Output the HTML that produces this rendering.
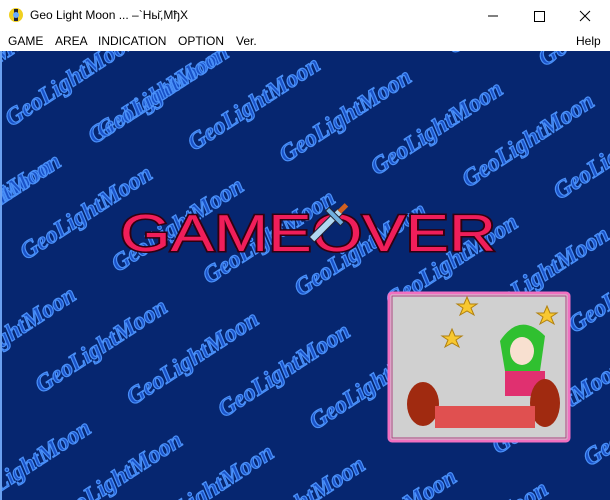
<!DOCTYPE html>
<html><head><meta charset="utf-8"><style>
html,body{margin:0;padding:0;width:610px;height:500px;overflow:hidden;background:#fff;font-family:"Liberation Sans","Noto Sans CJK JP",sans-serif}
.title{position:absolute;left:0;top:0;width:610px;height:31px;background:#fff;font-size:12px}
.title .t{position:absolute;left:30px;top:8px;color:#000}
.menu{position:absolute;left:0;top:31px;width:610px;height:20px;background:#fff;font-size:12px}
.menu span{position:absolute;top:3px}
.game{position:absolute;left:0;top:51px;width:610px;height:449px;background:#062670;overflow:hidden}
</style></head><body>
<div class="title">
<svg style="position:absolute;left:8px;top:7px" width="16" height="16"><circle cx="8" cy="8" r="7" fill="#f0d020"/><rect x="6" y="2" width="4" height="12" fill="#223"/><circle cx="8" cy="8" r="3" fill="#6af"/></svg>
<span class="t">Geo Light Moon ... –`Ны̆,MђX</span>
<svg style="position:absolute;left:480px;top:8px" width="120" height="16"><line x1="8" y1="8" x2="18" y2="8" stroke="#000"/><rect x="54.5" y="3.5" width="10" height="10" fill="none" stroke="#000"/><path d="M100 3 L110 13 M110 3 L100 13" stroke="#000"/></svg>
</div>
<div class="menu">
<span style="left:8px">GAME</span><span style="left:55px">AREA</span><span style="left:98px">INDICATION</span><span style="left:178px">OPTION</span><span style="left:236px">Ver.</span><span style="left:576px">Help</span>
</div>
<div class="game">
<svg width="610" height="449" style="position:absolute;left:0;top:0;overflow:hidden">
<g transform="rotate(-33 305 225)" font-family="Liberation Serif" font-style="italic" font-weight="bold" font-size="24" fill="#1a52c8" stroke="#4a90f8" stroke-width="1.2">
<g id="r"><text x="-400" y="0">GeoLightMoon</text><text x="-200" y="0">GeoLightMoon</text><text x="0" y="0">GeoLightMoon</text><text x="200" y="0">GeoLightMoon</text><text x="400" y="0">GeoLightMoon</text><text x="600" y="0">GeoLightMoon</text><text x="800" y="0">GeoLightMoon</text></g>
<use href="#r" x="0" y="-180"/><use href="#r" x="70" y="-120"/><use href="#r" x="140" y="-60"/><use href="#r" x="10" y="0"/><use href="#r" x="80" y="60"/><use href="#r" x="150" y="120"/><use href="#r" x="20" y="180"/><use href="#r" x="90" y="240"/><use href="#r" x="160" y="300"/><use href="#r" x="30" y="360"/><use href="#r" x="100" y="420"/><use href="#r" x="170" y="480"/><use href="#r" x="40" y="540"/>
</g>
<rect x="0" y="0" width="2" height="449" fill="#6aa0f0"/>
<text x="120" y="200" font-family="Liberation Sans" font-size="52" fill="#f01e5a" stroke="#300010" stroke-width="3" paint-order="stroke" textLength="376" lengthAdjust="spacingAndGlyphs">GAMEOVER</text>
<g transform="rotate(45 327 174)"><rect x="323" y="155" width="7" height="40" fill="#b0d8f0" stroke="#223" stroke-width="1"/><rect x="316" y="160" width="21" height="5" fill="#70b0e0" stroke="#223"/><rect x="324" y="146" width="5" height="10" fill="#d06020"/></g>
<rect x="389" y="242" width="180" height="148" rx="3" fill="#d0d0d0" stroke="#f070c0" stroke-width="3"/>
<rect x="392" y="245" width="174" height="142" fill="none" stroke="#b04080" stroke-width="1"/>
<g fill="#f8c830" stroke="#b08010">
<polygon points="467,246 470,253 477,253 471,257 474,264 467,260 460,264 463,257 457,253 464,253"/>
<polygon points="547,255 550,262 557,262 551,266 554,273 547,269 540,273 543,266 537,262 544,262"/>
<polygon points="452,278 455,285 462,285 456,289 459,296 452,292 445,296 448,289 442,285 449,285"/>
</g>
<path d="M500 290 Q520 260 545 285 L540 320 L505 320 Z" fill="#30c030"/>
<ellipse cx="522" cy="300" rx="12" ry="14" fill="#f8e0d0"/>
<rect x="505" y="320" width="40" height="25" fill="#e03070"/>
<ellipse cx="423" cy="353" rx="16" ry="22" fill="#a02a10"/>
<ellipse cx="545" cy="352" rx="15" ry="24" fill="#a02a10"/>
<rect x="435" y="355" width="100" height="22" fill="#e05050"/>
</svg>
</div>
</body></html>
